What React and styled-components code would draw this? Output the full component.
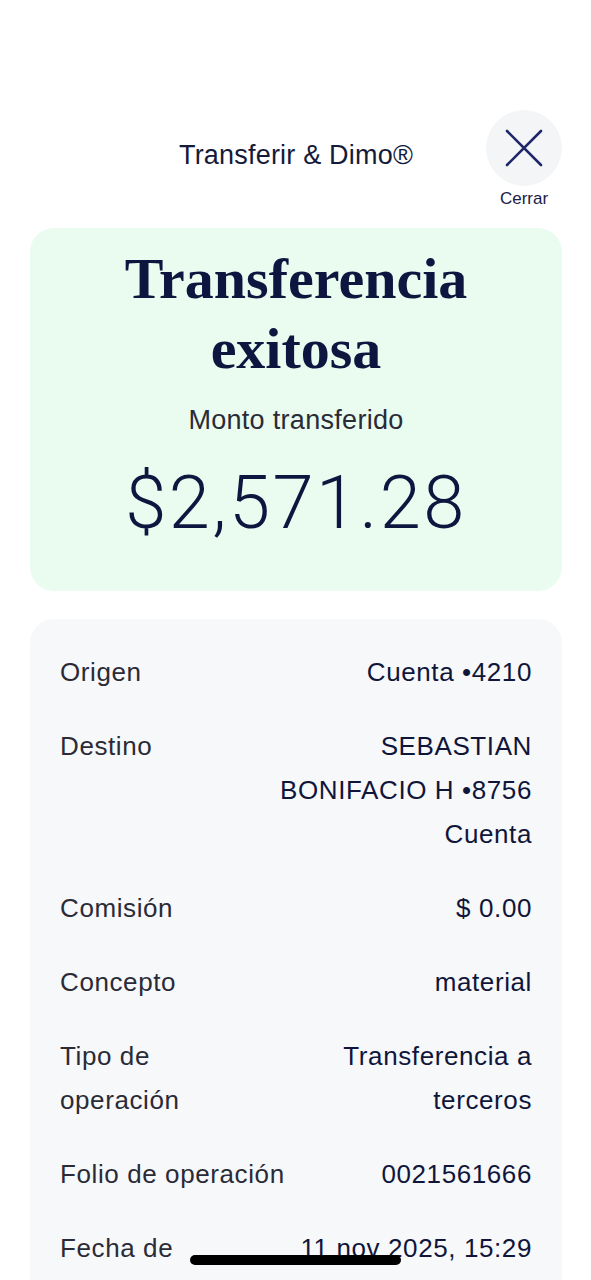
import React from "react";
import styled, { createGlobalStyle } from "styled-components";

const GlobalStyle = createGlobalStyle`
  body {
    margin: 0;
    background: #ffffff;
    font-family: "Liberation Sans", Arial, sans-serif;
    color: #141a3a;
  }
`;

const Page = styled.div({
  width: "591px",
  minHeight: "1280px",
  overflow: "hidden",
});

const Header = styled.header({
  display: "grid",
  gridTemplateColumns: "1fr auto 1fr",
  alignItems: "start",
  padding: "110px 29px 0 30px",
});

const Title = styled.h1({
  gridColumn: "2",
  margin: "29px 0 0",
  fontSize: "27px",
  lineHeight: "32px",
  fontWeight: "400",
  letterSpacing: "0.2px",
  color: "#141a3a",
  whiteSpace: "nowrap",
});

const CloseWrap = styled.div({
  gridColumn: "3",
  justifySelf: "end",
  display: "flex",
  flexDirection: "column",
  alignItems: "center",
});

const CloseButton = styled.button({
  width: "76px",
  height: "76px",
  borderRadius: "50%",
  border: "none",
  background: "#f4f5f7",
  display: "flex",
  alignItems: "center",
  justifyContent: "center",
  padding: 0,
});

const CloseLabel = styled.span({
  marginTop: "3px",
  fontSize: "17px",
  lineHeight: "20px",
  color: "#1a2046",
});

const SuccessCard = styled.section({
  margin: "19px 29px 0 30px",
  background: "#e9fcef",
  borderRadius: "24px",
  padding: "16px 20px 46px",
  display: "flex",
  flexDirection: "column",
  alignItems: "center",
  textAlign: "center",
});

const Heading = styled.h2({
  margin: 0,
  fontFamily: '"Liberation Serif", "Times New Roman", serif',
  fontWeight: "700",
  fontSize: "58px",
  lineHeight: "70px",
  color: "#0e1640",
});

const AmountLabel = styled.p({
  margin: "20px 0 0",
  fontSize: "27px",
  lineHeight: "32px",
  letterSpacing: "0.3px",
  color: "#2a2b36",
});

const Amount = styled.p({
  margin: "25px 0 0",
  fontFamily: "Roboto, sans-serif",
  fontWeight: "300",
  fontSize: "74px",
  lineHeight: "84px",
  letterSpacing: "2.5px",
  color: "#0e1640",
});

const DetailCard = styled.section({
  margin: "28px 29px 0 30px",
  background: "#f7f8fa",
  borderRadius: "24px",
  padding: "31px 30px 40px",
  display: "flex",
  flexDirection: "column",
  gap: "30px",
});

const Row = styled.div({
  display: "flex",
  justifyContent: "space-between",
  alignItems: "flex-start",
  gap: "16px",
  fontSize: "26px",
  lineHeight: "44px",
  letterSpacing: "0.6px",
});

const Label = styled.span({
  flex: "1 1 auto",
  minWidth: 0,
  color: "#2a2b36",
});

const Value = styled.span({
  flex: "0 0 auto",
  maxWidth: "270px",
  textAlign: "right",
  color: "#10163a",
});

const HomeIndicator = styled.div({
  position: "fixed",
  left: "190px",
  bottom: "15px",
  width: "211px",
  height: "10px",
  borderRadius: "5px",
  background: "#000",
});

const details = [
  ["Origen", "Cuenta •4210"],
  ["Destino", "SEBASTIAN BONIFACIO H •8756 Cuenta"],
  ["Comisión", "$ 0.00"],
  ["Concepto", "material"],
  ["Tipo de operación", "Transferencia a terceros"],
  ["Folio de operación", "0021561666"],
  ["Fecha de operación", "11 nov 2025, 15:29"],
];

function CloseIcon() {
  return (
    <svg width="38" height="38" viewBox="0 0 38 38" fill="none">
      <path d="M2 2L36 36M36 2L2 36" stroke="#1f276b" strokeWidth="2.6" strokeLinecap="round" />
    </svg>
  );
}

export default function App() {
  return (
    <Page>
      <GlobalStyle />
      <Header>
        <Title>Transferir &amp; Dimo®</Title>
        <CloseWrap>
          <CloseButton aria-label="Cerrar">
            <CloseIcon />
          </CloseButton>
          <CloseLabel>Cerrar</CloseLabel>
        </CloseWrap>
      </Header>
      <SuccessCard>
        <Heading>
          Transferencia
          <br />
          exitosa
        </Heading>
        <AmountLabel>Monto transferido</AmountLabel>
        <Amount>$2,571.28</Amount>
      </SuccessCard>
      <DetailCard>
        {details.map(([label, value]) => (
          <Row key={label}>
            <Label>{label}</Label>
            <Value>{value}</Value>
          </Row>
        ))}
      </DetailCard>
      <HomeIndicator />
    </Page>
  );
}
